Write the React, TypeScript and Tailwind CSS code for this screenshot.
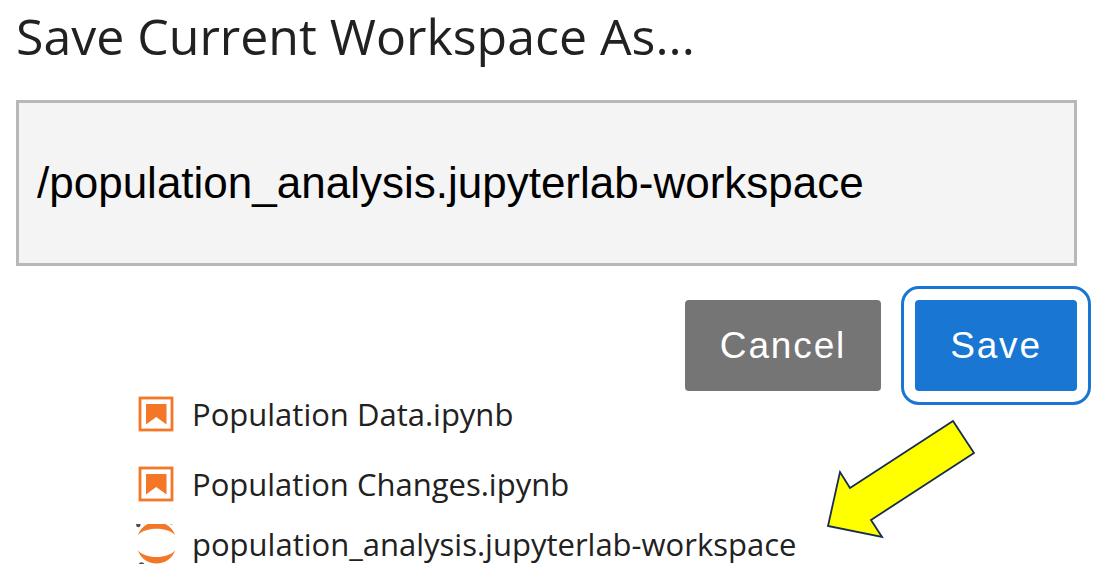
const NotebookIcon = () => (
  <svg className="size-9 shrink-0" viewBox="0 0 36 36" aria-hidden="true">
    <rect x="2" y="2" width="32" height="32" fill="none" stroke="#f37726" strokeWidth="2.8" />
    <path d="M8 8h20.5v20.500L18.200 21 8 28.500z" fill="#f37726" />
  </svg>
);

const JupyterIcon = () => (
  <svg className="size-10 shrink-0" viewBox="0 0 40 40" aria-hidden="true">
    <path d="M1.7 11.2C4.800 3.200 11.800-2 20.500-2s15.700 5.200 18.800 13.200C35.500 7 28.500 4.800 20.500 4.800S5.500 7 1.700 11.200z" fill="#f37726" />
    <path d="M1.700 26.200C5.500 30.600 12.500 33 20.500 33s15-2.400 18.800-6.800C36.200 34.200 29.200 39.500 20.500 39.500S4.800 34.200 1.700 26.200z" fill="#f37726" />
    <circle cx="2.300" cy="1" r="2.200" fill="#4e4e4e" />
    <circle cx="5.500" cy="41.300" r="3" fill="#4e4e4e" />
    <circle cx="35.500" cy="-0.800" r="1.400" fill="#767677" />
  </svg>
);

const files = [
  { name: "Population Data.ipynb", icon: <NotebookIcon />, spacing: "" },
  { name: "Population Changes.ipynb", icon: <NotebookIcon />, spacing: "mt-6" },
  { name: "population_analysis.jupyterlab-workspace", icon: <JupyterIcon />, spacing: "mt-[14px]" },
];

export default function App() {
  return (
    <main className="bg-white pt-1 pl-4 font-['Open_Sans',sans-serif] text-[#212121]">
      <form className="pr-[35px]" onSubmit={(e) => e.preventDefault()}>
        <h1>
          <label htmlFor="workspace" className="block text-[50px] leading-[64px]">
            Save Current Workspace As...
          </label>
        </h1>

        <input
          id="workspace"
          type="text"
          defaultValue="/population_analysis.jupyterlab-workspace"
          className="mt-8 block h-[166px] w-full border-3 border-[#b8b8b8] bg-[#f4f4f4] px-[18px] font-['Liberation_Sans',sans-serif] text-[44px] text-black outline-none"
        />

        {/* Buttons */}
        <div className="mt-[34px] flex justify-end gap-[34px] font-['Liberation_Sans',sans-serif] text-[37px] font-medium tracking-wider text-white">
          <button type="button" className="h-[91px] w-[196px] rounded bg-[#757575]">
            Cancel
          </button>
          <button
            type="submit"
            className="h-[91px] w-[162px] rounded bg-[#1976d2] outline-3 outline-offset-11 outline-[#1976d2]"
          >
            Save
          </button>
        </div>
      </form>

      {/* Files */}
      <div className="flex items-start pl-[120px]">
        <ul className="w-[690px] text-[31px] leading-[46px]">
          {files.map((file) => (
            <li key={file.name} className={`flex items-center gap-4 ${file.spacing}`}>
              <span className="flex w-10 shrink-0 justify-center">{file.icon}</span>
              <span className="whitespace-nowrap">{file.name}</span>
            </li>
          ))}
        </ul>

        {/* Arrow pointing at the saved workspace */}
        <svg className="mt-7 h-[122px] w-[150px] shrink-0" viewBox="0 0 150 122" aria-hidden="true">
          <path
            d="M127 2l21 32L45 101l11 17L2 107l12-54L24 69z"
            fill="#ffff00"
            stroke="#172c51"
            strokeWidth="1.8"
          />
        </svg>
      </div>
    </main>
  );
}
